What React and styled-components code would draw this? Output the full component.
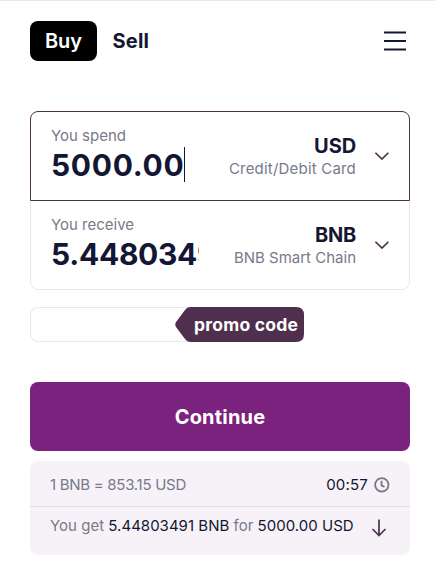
import React from "react";
import styled, { createGlobalStyle } from "styled-components";

const GlobalStyle = createGlobalStyle`
  *, *::before, *::after { box-sizing: border-box; }
  body { margin: 0; background: #fff; }
  button, input { font: inherit; letter-spacing: inherit; border: 0; margin: 0; padding: 0; background: none; color: inherit; }
`;

const Widget = styled.main`
  width: 435px;
  height: 571px;
  padding: 20px 25px 0 30px;
  border-top: 1px solid #e8e8e8;
  background: #fff;
  color: #141733;
  font-family: Inter, "Liberation Sans", sans-serif;
  overflow: hidden;
`;

const Header = styled.header`
  display: flex;
  align-items: center;
  width: 380px;
  height: 40px;
  margin-bottom: 50px;
`;

const Tab = styled.button`
  height: 40px;
  width: ${({ $active }) => ($active ? "67px" : "auto")};
  margin-right: ${({ $active }) => ($active ? "15.5px" : "0")};
  border-radius: 8px;
  background: ${({ $active }) => ($active ? "#000" : "transparent")};
  color: ${({ $active }) => ($active ? "#fff" : "#141733")};
  font-size: 20px;
  font-weight: ${({ $active }) => ($active ? "600" : "700")};
  letter-spacing: ${({ $active }) => ($active ? "0" : "0.2px")};
`;

const MenuButton = styled.button`
  margin-left: auto;
  margin-right: 3px;
  width: 24px;
  height: 24px;
  svg { display: block; }
`;

const Fields = styled.section`
  width: 380px;
`;

const Field = styled.div`
  display: flex;
  height: ${({ $active }) => ($active ? "90px" : "89px")};
  padding: ${({ $active }) => ($active ? "0 20px" : "0 20px 1px")};
  border: 1px solid ${({ $active }) => ($active ? "#4e304e" : "#e9e9eb")};
  border-top-width: ${({ $active }) => ($active ? "1px" : "0")};
  border-radius: ${({ $active }) => ($active ? "8px 8px 0 0" : "0 0 8px 8px")};
`;

const AmountColumn = styled.div`
  width: 148px;
  padding-top: 14px;
`;

const Label = styled.div`
  font-size: 15px;
  line-height: 20px;
  letter-spacing: ${({ $tracking }) => $tracking || "0"};
  color: #777a89;
  white-space: nowrap;
`;

const Amount = styled.div`
  display: flex;
  align-items: center;
  height: 38px;
  overflow: hidden;
  font-size: 30px;
  font-weight: 700;
  letter-spacing: ${({ $tracking }) => $tracking};
  white-space: nowrap;
`;

const Caret = styled.span`
  flex: none;
  width: 1px;
  height: 35px;
  margin-top: -2px;
  background: #141733;
`;

const CurrencyColumn = styled.div`
  flex: 1;
  padding-top: 22px;
  text-align: right;
`;

const Currency = styled.div`
  font-size: 20px;
  line-height: 25px;
  font-weight: 700;
  letter-spacing: ${({ $tracking }) => $tracking};
`;

const ChevronSlot = styled.span`
  display: flex;
  width: 33px;
  padding: 39px 0 0 18px;
`;

const Promo = styled.div`
  display: flex;
  width: 274px;
  height: 35px;
  margin-top: 17px;
  border: 1px solid #e9e9eb;
  border-right: 0;
  border-radius: 8px;
`;

const PromoInput = styled.input`
  width: 144px;
  outline: none;
`;

const PromoTag = styled.button`
  position: relative;
  width: 129px;
  height: 35px;
  margin-top: -1px;
  color: #fff;
  font-size: 17.5px;
  font-weight: 700;
  letter-spacing: 0.25px;
  svg { position: absolute; inset: 0; }
  span { position: relative; display: block; padding-left: 19px; text-align: left; white-space: nowrap; }
`;

const Continue = styled.button`
  display: block;
  width: 380px;
  height: 69px;
  margin-top: 40px;
  border-radius: 8px;
  background: #7b217e;
  color: #fff;
  font-size: 20px;
  font-weight: 700;
  letter-spacing: 0.2px;
`;

const Summary = styled.section`
  width: 380px;
  height: 94px;
  margin-top: 10px;
  border-radius: 8px;
  background: #f6f2f8;
`;

const SummaryRow = styled.div`
  display: flex;
  justify-content: space-between;
  height: ${({ $last }) => ($last ? "48px" : "46px")};
  padding: ${({ $last }) => ($last ? "9px 20px 0" : "14px 20px 0")};
  border-bottom: ${({ $last }) => ($last ? "0" : "1px solid #e2dce5")};
  color: #777a89;
  font-size: 15px;
  line-height: 20px;
  letter-spacing: ${({ $tracking }) => $tracking};
  white-space: nowrap;
  svg { flex: none; display: block; }
`;

const Strong = styled.span`
  color: #141733;
`;

const Timer = styled.span`
  display: flex;
  align-items: center;
  align-self: flex-start;
  gap: 5px;
  color: #141733;
  letter-spacing: 0.2px;
`;

const ArrowSlot = styled.span`
  padding: 3px 3px 0 0;
`;

const Chevron = () => (
  <svg width="16" height="11" viewBox="0 0 16 11" fill="none" stroke="#4e304e" strokeWidth="1.8">
    <path d="M1.500 1.500 8.500 8.300 15.300 1.500" />
  </svg>
);

export default function App() {
  return (
    <>
      <GlobalStyle />
      <Widget>
        <Header>
          <Tab $active>Buy</Tab>
          <Tab>Sell</Tab>
          <MenuButton aria-label="Menu">
            <svg width="24" height="24" viewBox="0 0 24 24" stroke="#141733" strokeWidth="2">
              <path d="M1 3.4h22M1 12h22M1 20.6h22" />
            </svg>
          </MenuButton>
        </Header>

        <Fields>
          <Field $active>
            <AmountColumn>
              <Label>You spend</Label>
              <Amount $tracking="0.7px">5000.00<Caret /></Amount>
            </AmountColumn>
            <CurrencyColumn>
              <Currency $tracking="-0.1px">USD</Currency>
              <Label $tracking="0.2px">Credit/Debit Card</Label>
            </CurrencyColumn>
            <ChevronSlot><Chevron /></ChevronSlot>
          </Field>
          <Field>
            <AmountColumn>
              <Label>You receive</Label>
              <Amount $tracking="-0.3px">5.44803491</Amount>
            </AmountColumn>
            <CurrencyColumn>
              <Currency $tracking="-0.2px">BNB</Currency>
              <Label>BNB Smart Chain</Label>
            </CurrencyColumn>
            <ChevronSlot><Chevron /></ChevronSlot>
          </Field>
        </Fields>

        <Promo>
          <PromoInput aria-label="Promo code" />
          <PromoTag>
            <svg width="129" height="35" viewBox="0 0 129 35" fill="#4e304e">
              <path d="M15 0H121Q129 0 129 8V27Q129 35 121 35H15Q12 35 10 32L1 20Q-.5 17.500 1 15L10 3Q12 0 15 0Z" />
            </svg>
            <span>promo code</span>
          </PromoTag>
        </Promo>

        <Continue>Continue</Continue>

        <Summary>
          <SummaryRow $tracking="-0.28px">
            <span>1 BNB = 853.15 USD</span>
            <Timer>
              00:57
              <svg width="17" height="17" viewBox="0 0 17 17" fill="none" stroke="#777a89" strokeWidth="1.8">
                <circle cx="8.800" cy="7.800" r="6.700" />
                <path d="M8.500 3.800v4.600l3 1.600" />
              </svg>
            </Timer>
          </SummaryRow>
          <SummaryRow $last $tracking="0.02px">
            <span>You get <Strong>5.44803491 BNB</Strong> for <Strong>5000.00 USD</Strong></span>
            <ArrowSlot>
              <svg width="16" height="19" viewBox="0 0 16 19" fill="none" stroke="#4e304e" strokeWidth="1.700">
                <path d="M8 .5v16M1.500 10 8 16.500l6.500-6.500" />
              </svg>
            </ArrowSlot>
          </SummaryRow>
        </Summary>
      </Widget>
    </>
  );
}
